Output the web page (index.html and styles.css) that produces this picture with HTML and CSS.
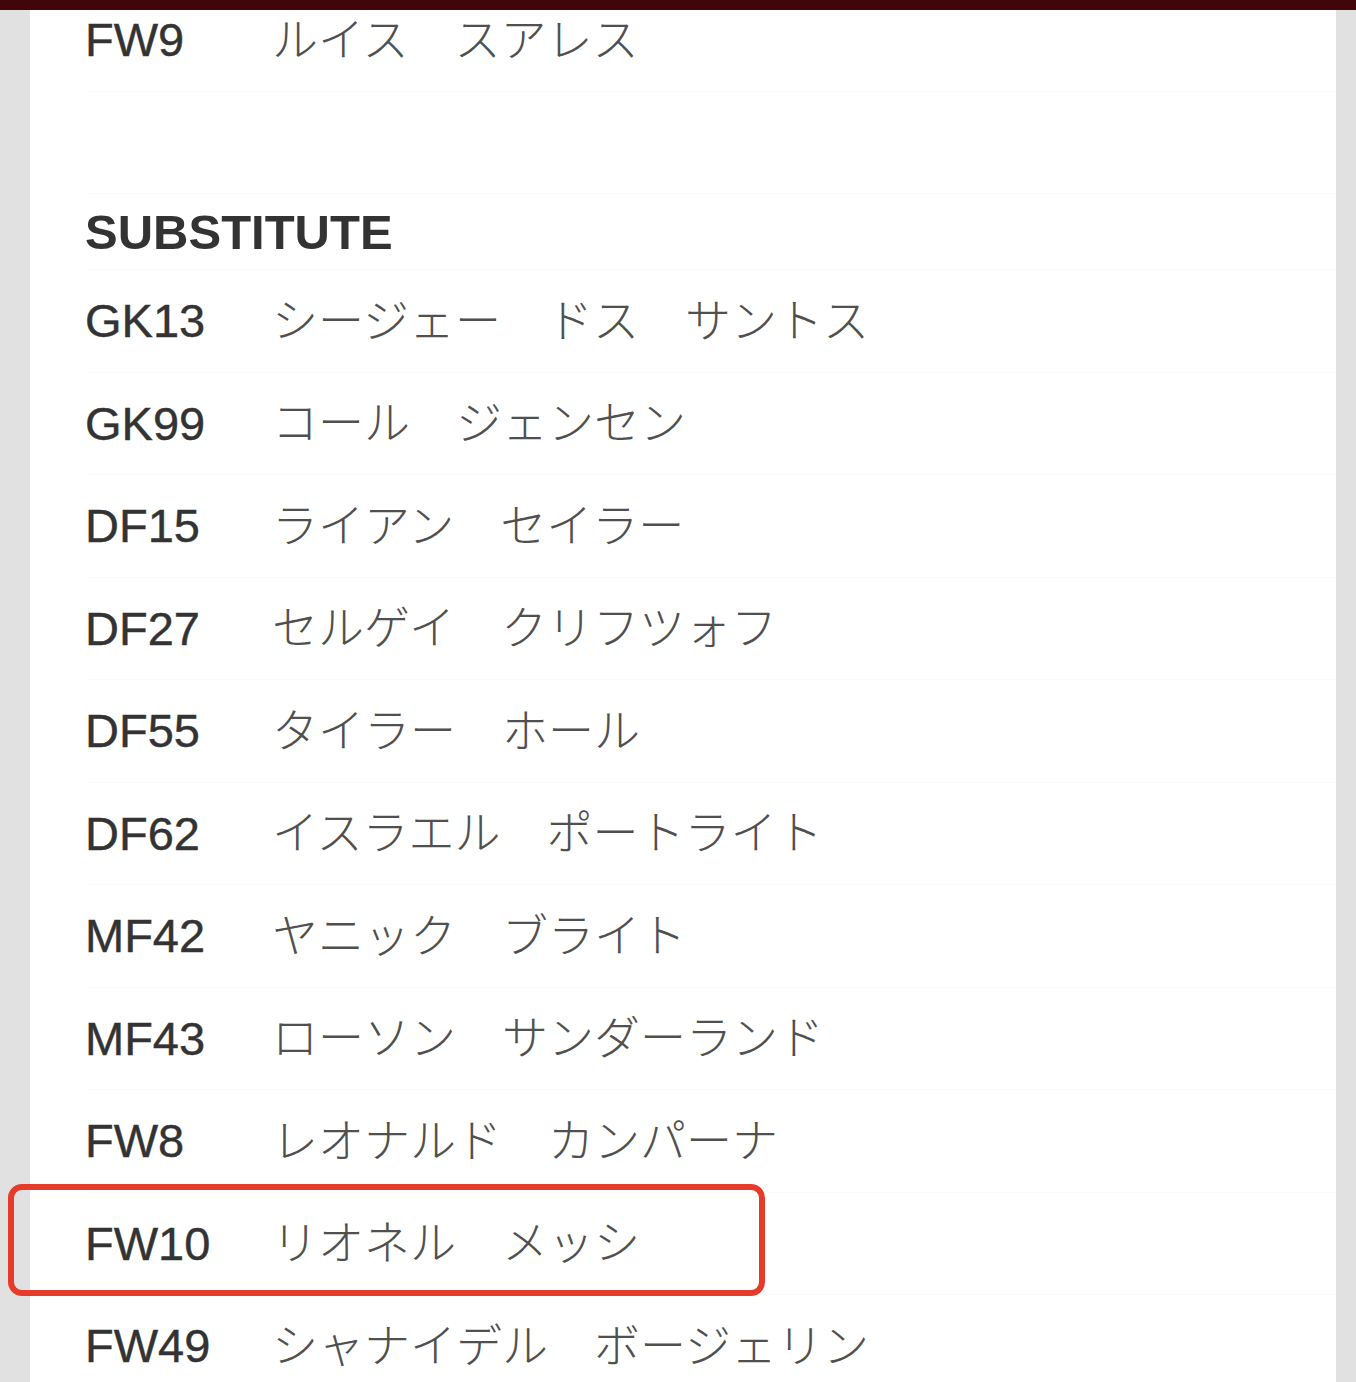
FILE: index.html
```html
<!DOCTYPE html>
<html lang="ja">
<head>
    <meta charset="UTF-8">
    <meta name="viewport" content="width=device-width, initial-scale=1.0">
    <title>Lineup</title>
    <link rel="stylesheet" href="styles.css">
</head>
<body>
    <div class="topbar"></div>
    <div class="panel">
        <div class="list">
            <div class="row"><span class="code">FW9</span><span class="name">ルイス　スアレス</span></div>
            <div class="row row-empty"></div>
            <div class="section-title">SUBSTITUTE</div>
            <div class="row"><span class="code">GK13</span><span class="name">シージェー　ドス　サントス</span></div>
            <div class="row"><span class="code">GK99</span><span class="name">コール　ジェンセン</span></div>
            <div class="row"><span class="code">DF15</span><span class="name">ライアン　セイラー</span></div>
            <div class="row"><span class="code">DF27</span><span class="name">セルゲイ　クリフツォフ</span></div>
            <div class="row"><span class="code">DF55</span><span class="name">タイラー　ホール</span></div>
            <div class="row"><span class="code">DF62</span><span class="name">イスラエル　ポートライト</span></div>
            <div class="row"><span class="code">MF42</span><span class="name">ヤニック　ブライト</span></div>
            <div class="row"><span class="code">MF43</span><span class="name">ローソン　サンダーランド</span></div>
            <div class="row"><span class="code">FW8</span><span class="name">レオナルド　カンパーナ</span></div>
            <div class="row highlighted">
                <span class="code">FW10</span><span class="name">リオネル　メッシ</span>
                <div class="highlight-box"></div>
            </div>
            <div class="row"><span class="code">FW49</span><span class="name">シャナイデル　ボージェリン</span></div>
        </div>
    </div>
</body>
</html>
```

FILE: styles.css
```css
:root {
    --bar-color: #410609;
    --gutter-color: #e1e1e1;
    --code-color: #333333;
    --name-color: #505050;
    --line-color: #fbfbfb;
    --mark-color: #e63b2b;
}

html, body {
    height: 100%;
}

body {
    margin: 0;
    padding: 0 20px 0 30px;
    background-color: var(--gutter-color);
    font-family: 'Liberation Sans', Arial, sans-serif;
    overflow: hidden;
}

.topbar {
    position: sticky;
    top: 0;
    z-index: 2;
    height: 10px;
    margin: 0 -20px 0 -30px;
    background-color: var(--bar-color);
}

.panel {
    background: #fff;
    min-height: 100%;
}

.list {
    margin-top: -21px;
    padding-left: 55px;
}

.row {
    position: relative;
    display: flex;
    align-items: center;
    height: 102.5px;
    border-bottom: 1px solid var(--line-color);
    box-sizing: border-box;
}

.code {
    width: 187px;
    flex-shrink: 0;
    font-size: 47px;
    color: var(--code-color);
    -webkit-text-stroke: 0.4px var(--code-color);
}

.name {
    margin-bottom: 8px;
    font-family: 'Noto Sans CJK JP', sans-serif;
    font-size: 46px;
    font-weight: 300;
    color: var(--name-color);
}

.section-title {
    display: flex;
    align-items: center;
    height: 75px;
    font-size: 49px;
    font-weight: 700;
    color: var(--code-color);
    border-bottom: 1px solid var(--line-color);
}

.highlight-box {
    position: absolute;
    left: -77px;
    top: -9px;
    width: 757px;
    height: 112px;
    border: 6px solid var(--mark-color);
    border-radius: 14px;
    box-sizing: border-box;
}
```
